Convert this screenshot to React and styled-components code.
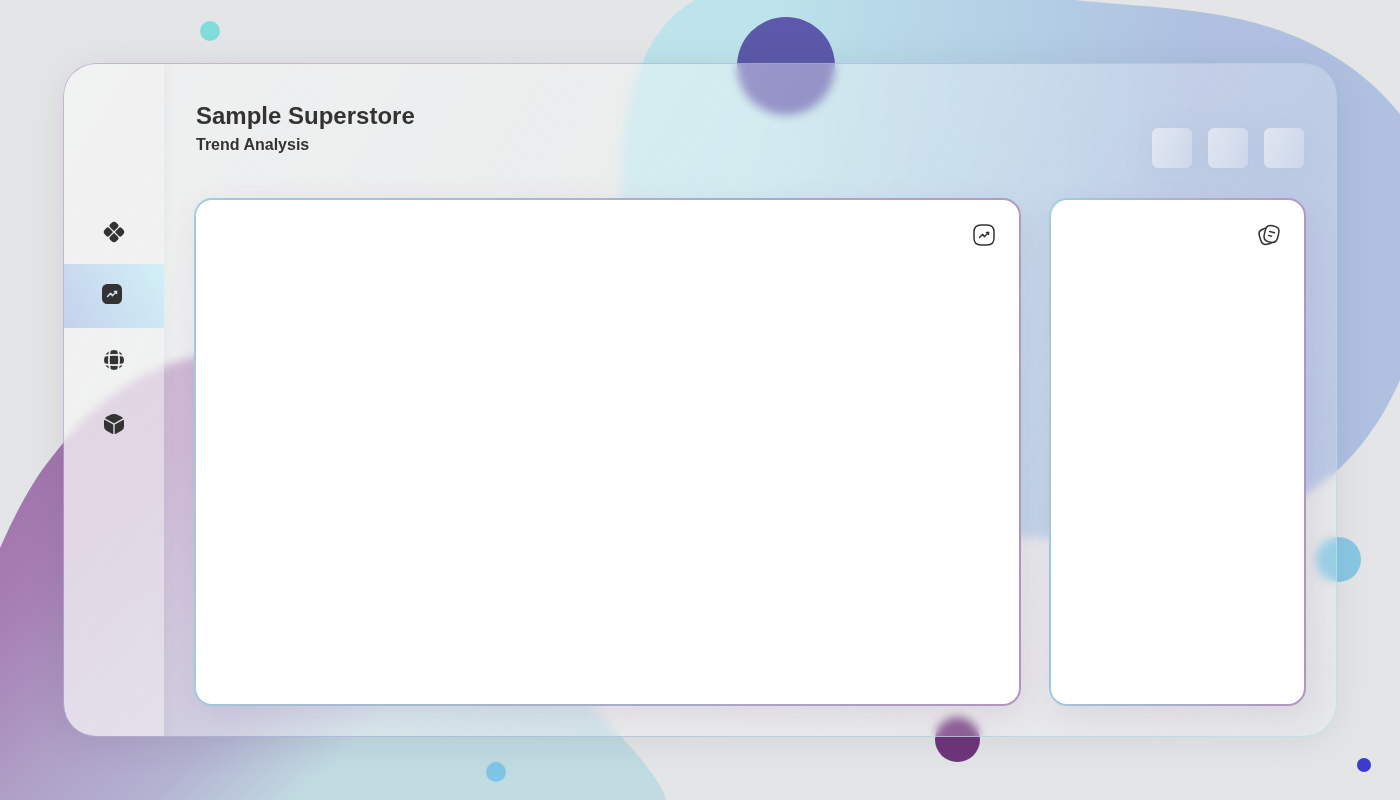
import React from "react";
import styled, { createGlobalStyle } from "styled-components";

const ink = "#333333";

const GlobalStyle = createGlobalStyle`
  *, *::before, *::after { box-sizing: border-box; }
  body {
    margin: 0;
    background: #e3e5e6;
    color: ${ink};
    font-family: "Liberation Sans", Arial, sans-serif;
  }
`;

const Page = styled.div`
  position: relative;
  display: flex;
  min-height: 100vh;
  padding: 64px;
  overflow: hidden;
`;

const Backdrop = styled.svg`
  position: absolute;
  inset: 0;
  width: 100%;
  height: 100%;
`;

const Panel = styled.div`
  position: relative;
  display: flex;
  flex: 1;
  min-width: 0;
  border-radius: 32px;
  background: linear-gradient(120deg, rgba(248, 248, 248, 0.58), rgba(248, 248, 248, 0.12));
  backdrop-filter: blur(5px);
  box-shadow: 0 4px 40px rgba(0, 0, 0, 0.08);

  &::before {
    content: "";
    position: absolute;
    inset: -1px;
    padding: 1px;
    border-radius: 33px;
    background: linear-gradient(120deg, rgba(185, 145, 200, 0.6), rgba(174, 190, 224, 0.8) 50%, rgba(188, 227, 234, 0.9));
    mask: linear-gradient(#000 0 0) content-box exclude, linear-gradient(#000 0 0);
    pointer-events: none;
  }
`;

const Sidebar = styled.nav`
  display: flex;
  flex-direction: column;
  flex: none;
  width: 100px;
  padding-top: 136px;
  border-radius: 32px 0 0 32px;
  background: rgba(244, 244, 244, 0.5);
`;

const NavLink = styled.a`
  display: flex;
  align-items: center;
  justify-content: center;
  height: 64px;
  color: ${ink};
  background: ${(p) => (p.$active ? "linear-gradient(60deg, #c4d2ec, #d2f0f6)" : "none")};
`;

const Content = styled.main`
  display: flex;
  flex-direction: column;
  flex: 1;
  gap: 32px;
  min-width: 0;
  padding: 32px;
  background: linear-gradient(90deg, rgba(0, 0, 0, 0.02), rgba(0, 0, 0, 0) 12px);
  border-radius: 0 32px 32px 0;
`;

const Header = styled.header`
  display: flex;
  align-items: flex-end;
  justify-content: space-between;
  height: 72px;
`;

const Heading = styled.div`
  align-self: flex-start;
`;

const Title = styled.h1`
  margin: 0;
  font-size: 24px;
  line-height: 40px;
`;

const Subtitle = styled.h2`
  margin: 0;
  font-size: 16px;
  line-height: 18px;
`;

const Actions = styled.div`
  display: flex;
  gap: 16px;
`;

const ActionButton = styled.button`
  width: 40px;
  height: 40px;
  padding: 0;
  border: 0;
  border-radius: 6px;
  background: linear-gradient(110deg, rgba(244, 245, 247, 0.62), rgba(244, 246, 248, 0.25));
  box-shadow: 0 4px 32px rgba(100, 120, 170, 0.12);
`;

const Cards = styled.div`
  display: grid;
  grid-template-columns: minmax(0, 1fr) 253px;
  gap: 32px;
  flex: 1;
`;

const Card = styled.section`
  position: relative;
  display: flex;
  align-items: flex-start;
  justify-content: flex-end;
  padding: 24px;
  border-radius: 16px;
  background: #fff;
  box-shadow: 4px 8px 32px rgba(125, 70, 145, 0.14);

  &::before {
    content: "";
    position: absolute;
    inset: -2px;
    z-index: -1;
    border-radius: 18px;
    background: linear-gradient(90deg, #a5d2e0, #b59dc6);
  }
`;

const CardButton = styled.button`
  display: flex;
  padding: 0;
  border: 0;
  background: none;
  color: ${ink};
`;

const CategoryIcon = () => (
  <svg width="24" height="24" viewBox="0 0 24 24" fill="currentColor" aria-hidden="true">
    {[45, 135, 225, 315].map((angle) => (
      <path
        key={angle}
        transform={`rotate(${angle} 12 12)`}
        d="M13.1 12.6H18.2A2 2 0 0 1 20.2 14.6V16.6A3.6 3.6 0 0 1 16.6 20.2H14.6A2 2 0 0 1 12.6 18.2V13.1Q12.6 12.6 13.1 12.6Z"
      />
    ))}
  </svg>
);

const TrendSolidIcon = () => (
  <svg width="24" height="24" viewBox="2 2 24 24" fill="none" aria-hidden="true">
    <path
      fill="currentColor"
      d="M16.2 2H7.8C4.2 2 2 4.2 2 7.8V16.2C2 19.8 4.2 22 7.8 22H16.2C19.8 22 22 19.8 22 16.2V7.8C22 4.2 19.8 2 16.2 2Z"
    />
    <g stroke="#cfe6f2" strokeWidth="1.5" strokeLinecap="round" strokeLinejoin="round">
      <path d="M16.5 9.5L12.3 13.7L10.7 11.3L7.5 14.5" />
      <path d="M14.5 9.5H16.5V11.5" />
    </g>
  </svg>
);

const GlobeIcon = () => (
  <svg width="24" height="24" viewBox="0 0 24 24" aria-hidden="true">
    <mask id="globe-lines">
      <circle cx="12" cy="12" r="10" fill="#fff" />
      <g fill="none" stroke="#000" strokeWidth="1.7">
        <path d="M8.2 1Q5.6 12 8.2 23" />
        <path d="M15.8 1Q18.4 12 15.8 23" />
        <path d="M1 8.2Q12 5.6 23 8.2" />
        <path d="M1 15.8Q12 18.4 23 15.8" />
      </g>
    </mask>
    <rect width="24" height="24" fill="currentColor" mask="url(#globe-lines)" />
  </svg>
);

const BoxIcon = () => (
  <svg width="24" height="24" viewBox="0 0 24 24" fill="currentColor" aria-hidden="true">
    <path d="M20.6 6.6 12.6 11.1Q12 11.4 11.4 11.1L3.4 6.6Q2.8 6.2 3.3 5.7Q4 5 5 4.4L9.8 2.3Q12 1.5 14.2 2.3L19 4.4Q20 5 20.7 5.7Q21.2 6.2 20.6 6.6Z" />
    <path d="M11.3 13V21.4Q11.3 22.1 10.6 21.9Q10.1 21.8 9.5 21.4L4.6 18.8Q2 17.4 2 14.6V9Q2 7.6 3 8.1L10.7 12.3Q11.3 12.6 11.3 13Z" />
    <path d="M12.7 13V21.4Q12.7 22.1 13.4 21.9Q13.9 21.8 14.5 21.4L19.4 18.8Q22 17.4 22 14.6V9Q22 7.6 21 8.1L13.3 12.3Q12.7 12.6 12.7 13Z" />
  </svg>
);

const LineIcon = ({ paths }) => (
  <svg
    width="22"
    height="22"
    viewBox="1 1 22 22"
    fill="none"
    stroke="currentColor"
    strokeWidth="1.5"
    strokeLinecap="round"
    strokeLinejoin="round"
    aria-hidden="true"
  >
    {paths.map((d) => (
      <path key={d} d={d} />
    ))}
  </svg>
);

const trendPaths = [
  "M9 22H15C20 22 22 20 22 15V9C22 4 20 2 15 2H9C4 2 2 4 2 9V15C2 20 4 22 9 22Z",
  "M16.5 9.5L12.3 13.7L10.7 11.3L7.5 14.5",
  "M14.5 9.5H16.5V11.5",
];

const notePaths = [
  "M21.66 10.44L20.68 14.62C19.84 18.23 18.18 19.69 15.06 19.39C14.56 19.35 14.02 19.26 13.44 19.12L11.76 18.72C7.59 17.73 6.3 15.67 7.28 11.49L8.26 7.3C8.46 6.45 8.7 5.71 9 5.1C10.17 2.68 12.16 2.03 15.5 2.82L17.17 3.21C21.36 4.19 22.64 6.26 21.66 10.44Z",
  "M15.06 19.39C14.44 19.81 13.66 20.16 12.71 20.47L11.13 20.99C7.16 22.27 5.07 21.2 3.78 17.23L2.5 13.28C1.22 9.31 2.28 7.21 6.25 5.93L7.83 5.41C8.24 5.28 8.63 5.17 9 5.1",
  "M12.64 8.53L17.49 9.76",
  "M11.66 12.4L14.56 13.14",
];

const dots = [
  { cx: 210, cy: 31, r: 10, fill: "#82dcdc" },
  { cx: 786, cy: 66, r: 49, fill: "#5c59aa" },
  { cx: 1338.5, cy: 559.5, r: 22.5, fill: "#8ac8e4" },
  { cx: 957.5, cy: 739.5, r: 22.5, fill: "#6f367b" },
  { cx: 496, cy: 772, r: 10, fill: "#7ec6e6" },
  { cx: 1364, cy: 765, r: 7, fill: "#3d3bcf" },
];

const navItems = [
  { label: "Overview", Icon: CategoryIcon },
  { label: "Trends", Icon: TrendSolidIcon, active: true },
  { label: "Regions", Icon: GlobeIcon },
  { label: "Products", Icon: BoxIcon },
];

const Shapes = () => (
  <Backdrop viewBox="0 0 1400 800" preserveAspectRatio="xMidYMid slice" aria-hidden="true">
    <defs>
      <linearGradient id="violet" gradientUnits="userSpaceOnUse" x1="60" y1="460" x2="340" y2="760">
        <stop offset="0" stopColor="#a276ae" />
        <stop offset="0.2" stopColor="#a780b5" />
        <stop offset="0.5" stopColor="#af9ec6" />
        <stop offset="0.75" stopColor="#b3b2d1" />
        <stop offset="1" stopColor="#c1dbe2" />
      </linearGradient>
      <linearGradient id="azure" gradientUnits="userSpaceOnUse" x1="760" y1="0" x2="1200" y2="30">
        <stop offset="0" stopColor="#bde4eb" />
        <stop offset="0.28" stopColor="#b8d9e8" />
        <stop offset="0.6" stopColor="#b3cfe5" />
        <stop offset="1" stopColor="#afc0e1" />
      </linearGradient>
    </defs>
    <path
      fill="url(#violet)"
      d="M0 548Q20 502 42 470Q54 454 64 442C100 396 150 366 196 357C330 330 440 560 590 706C625 738 662 780 666 800H0Z"
    />
    <path
      fill="url(#azure)"
      d="M695 0C670 14 652 38 642 64C624 100 622 150 622 190C622 400 800 530 1020 537C1160 545 1250 530 1304 495C1350 468 1380 425 1400 380V114C1355 58 1290 25 1207 13C1160 6 1110 4 1075 0Z"
    />
    {dots.map((dot) => (
      <circle key={dot.fill} {...dot} />
    ))}
  </Backdrop>
);

export default function App() {
  return (
    <>
      <GlobalStyle />
      <Page>
        <Shapes />
        <Panel>
          <Sidebar aria-label="Main">
            {navItems.map(({ label, Icon, active }) => (
              <NavLink
                key={label}
                href={`#${label.toLowerCase()}`}
                aria-label={label}
                aria-current={active ? "page" : undefined}
                $active={active}
              >
                <Icon />
              </NavLink>
            ))}
          </Sidebar>
          <Content>
            <Header>
              <Heading>
                <Title>Sample Superstore</Title>
                <Subtitle>Trend Analysis</Subtitle>
              </Heading>
              <Actions>
                <ActionButton type="button" aria-label="Filter" />
                <ActionButton type="button" aria-label="Download" />
                <ActionButton type="button" aria-label="Settings" />
              </Actions>
            </Header>
            <Cards>
              <Card aria-label="Trend">
                <CardButton type="button" aria-label="Trend chart">
                  <LineIcon paths={trendPaths} />
                </CardButton>
              </Card>
              <Card aria-label="Notes">
                <CardButton type="button" aria-label="Notes">
                  <LineIcon paths={notePaths} />
                </CardButton>
              </Card>
            </Cards>
          </Content>
        </Panel>
      </Page>
    </>
  );
}
